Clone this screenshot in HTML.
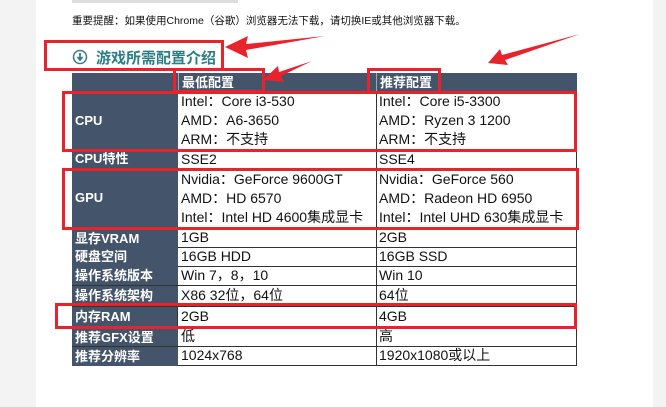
<!DOCTYPE html><html><head><meta charset="utf-8"><style>
body{margin:0;width:666px;height:407px;position:relative;overflow:hidden;background:#fff;font-family:"Liberation Sans","Noto Sans CJK SC",sans-serif}
.a{position:absolute}
.c{position:absolute;font-size:14px;color:#111;white-space:nowrap;line-height:19px}
.h{position:absolute;background:#44546a;color:#fff;font-weight:bold;font-size:13px;line-height:19px;padding-left:3px;box-sizing:border-box;white-space:nowrap}
.r{position:absolute;border:3px solid #e8232b;box-sizing:border-box}
</style></head><body>
<div class="a" style="left:0;top:0;width:36px;height:407px;background:#f3f3f3"></div>
<div class="a" style="left:653px;top:0;width:13px;height:407px;background:#f3f3f3"></div>
<div class="a" style="left:72px;top:0;width:166px;height:3px;background:#ddd"></div>
<div class="a" style="left:72px;top:13px;font-size:10.5px;color:#111">重要提醒：如果使用Chrome（谷歌）浏览器无法下载，请切换IE或其他浏览器下载。</div>
<svg class="a" style="left:72px;top:49px" width="16" height="16"><circle cx="8" cy="8" r="6.5" fill="none" stroke="#3a7b88" stroke-width="1.5"/><path d="M8 4v6M5.5 8L8 11 10.5 8" stroke="#3a7b88" stroke-width="1.8" fill="none"/></svg>
<div class="a" style="left:96px;top:47px;font-size:15px;color:#2a7f86;font-weight:bold">游戏所需配置介绍</div>
<div class="a" style="left:72px;top:73px;width:505px;height:293px;background:#fff;border:1px solid #333;box-sizing:border-box"></div>
<div class="h" style="left:72px;top:73px;width:505px;height:19px"></div>
<div class="h" style="left:178px;top:73px;width:198px;height:19px;border-left:1px solid #9aa">最低配置</div>
<div class="h" style="left:376px;top:73px;width:200px;height:19px;border-left:1px solid #9aa">推荐配置</div>
<div class="a" style="left:72px;top:92px;width:106px;height:274px;background:#44546a"></div>
<div class="a" style="left:177px;top:92px;width:1px;height:274px;background:#333"></div>
<div class="a" style="left:376px;top:92px;width:1px;height:274px;background:#333"></div>
<div class="h" style="left:72px;top:92px;width:106px;height:57px;line-height:57px">CPU</div>
<div class="c" style="left:181px;top:92px">Intel：Core i3-530</div><div class="c" style="left:379px;top:92px">Intel：Core i5-3300</div>
<div class="c" style="left:181px;top:111px">AMD：A6-3650</div><div class="c" style="left:379px;top:111px">AMD：Ryzen 3 1200</div>
<div class="c" style="left:181px;top:130px">ARM：不支持</div><div class="c" style="left:379px;top:130px">ARM：不支持</div>
<div class="a" style="left:72px;top:149px;width:505px;height:1px;background:#333"></div>
<div class="h" style="left:72px;top:150px;width:106px;height:18px;line-height:18px">CPU特性</div>
<div class="c" style="left:181px;top:150px">SSE2</div><div class="c" style="left:379px;top:150px">SSE4</div>
<div class="a" style="left:72px;top:168px;width:505px;height:1px;background:#333"></div>
<div class="h" style="left:72px;top:169px;width:106px;height:58px;line-height:58px">GPU</div>
<div class="c" style="left:181px;top:170px">Nvidia：GeForce 9600GT</div><div class="c" style="left:379px;top:170px">Nvidia：GeForce 560</div>
<div class="c" style="left:181px;top:189px">AMD：HD 6570</div><div class="c" style="left:379px;top:189px">AMD：Radeon HD 6950</div>
<div class="c" style="left:181px;top:208px">Intel：Intel HD 4600集成显卡</div><div class="c" style="left:379px;top:208px">Intel：Intel UHD 630集成显卡</div>
<div class="a" style="left:72px;top:228px;width:505px;height:1px;background:#333"></div>
<div class="h" style="left:72px;top:229px;width:106px">显存VRAM</div><div class="c" style="left:181px;top:228px">1GB</div><div class="c" style="left:379px;top:228px">2GB</div>
<div class="a" style="left:72px;top:247px;width:505px;height:1px;background:#333"></div>
<div class="h" style="left:72px;top:247px;width:106px">硬盘空间</div><div class="c" style="left:181px;top:247px">16GB HDD</div><div class="c" style="left:379px;top:247px">16GB SSD</div>
<div class="a" style="left:72px;top:266px;width:505px;height:1px;background:#333"></div>
<div class="h" style="left:72px;top:266px;width:106px">操作系统版本</div><div class="c" style="left:181px;top:266px">Win 7，8，10</div><div class="c" style="left:379px;top:266px">Win 10</div>
<div class="a" style="left:72px;top:285px;width:505px;height:1px;background:#333"></div>
<div class="h" style="left:72px;top:286px;width:106px">操作系统架构</div><div class="c" style="left:181px;top:286px">X86 32位，64位</div><div class="c" style="left:379px;top:286px">64位</div>
<div class="a" style="left:72px;top:305px;width:505px;height:22px;background:#fff"></div>
<div class="a" style="left:72px;top:306px;width:505px;height:1px;background:#333"></div>
<div class="h" style="left:72px;top:307px;width:106px">内存RAM</div>
<div class="a" style="left:177px;top:305px;width:1px;height:22px;background:#333"></div><div class="a" style="left:376px;top:305px;width:1px;height:22px;background:#333"></div>
<div class="c" style="left:181px;top:307px">2GB</div><div class="c" style="left:379px;top:307px">4GB</div>
<div class="a" style="left:72px;top:327px;width:505px;height:1px;background:#333"></div>
<div class="h" style="left:72px;top:328px;width:106px">推荐GFX设置</div><div class="c" style="left:181px;top:327px">低</div><div class="c" style="left:379px;top:327px">高</div>
<div class="a" style="left:72px;top:346px;width:505px;height:1px;background:#333"></div>
<div class="h" style="left:72px;top:347px;width:106px">推荐分辨率</div><div class="c" style="left:181px;top:346px">1024x768</div><div class="c" style="left:379px;top:346px">1920x1080或以上</div>
<div class="r" style="left:44px;top:40px;width:180px;height:31px"></div>
<div class="r" style="left:173px;top:68px;width:92px;height:25px"></div>
<div class="r" style="left:367px;top:68px;width:74px;height:26px"></div>
<div class="r" style="left:62px;top:91px;width:515px;height:61px"></div>
<div class="r" style="left:62px;top:168px;width:517px;height:62px"></div>
<div class="r" style="left:55px;top:303px;width:522px;height:26px"></div>
<svg class="a" style="left:0;top:0" width="666" height="407">
<g fill="#e8232b"><polygon points="225,47 248,36 246,44 325,36 246,50 248,58"/>
<polygon points="263,80 278,66 279,72 312,61 281,76 284,82"/>
<polygon points="488,63 500,49 502,55 580,34 505,60 508,65"/></g>
</svg>
</body></html>
